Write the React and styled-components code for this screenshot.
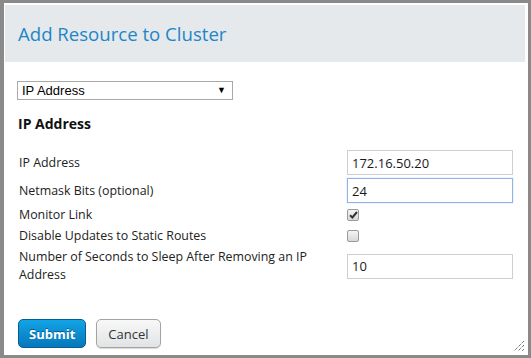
import React from "react";
import styled, { createGlobalStyle } from "styled-components";

const GlobalStyle = createGlobalStyle`
  html, body {
    margin: 0;
    padding: 0;
    background: #8a8a8a;
  }
  body {
    font-family: "Open Sans", "Noto Sans", sans-serif;
  }
`;

const Dialog = styled.div`
  position: relative;
  box-sizing: border-box;
  margin: 3px 0 0 4px;
  width: 524px;
  height: 352px;
  background: #fff;
  padding: 2px 3px 0 1px;
`;

const Header = styled.div`
  height: 57px;
  background: #e5e9ec;
  display: flex;
  align-items: center;
  padding-left: 13px;
`;

const Title = styled.h1`
  margin: 0;
  font-size: 18.6px;
  font-weight: 400;
  color: #1d86c8;
`;

const Body = styled.div`
  padding: 0 13px;
  display: flex;
  flex-direction: column;
`;

const Select = styled.div`
  box-sizing: border-box;
  margin: 19px 0 0 -1px;
  width: 216px;
  height: 19px;
  border: 1px solid #a9a9a9;
  display: flex;
  align-items: center;
  justify-content: space-between;
  padding: 0 6px 0 4px;
  font-family: "Liberation Sans", Arial, sans-serif;
  font-size: 13px;
  color: #000;
`;

const Arrow = styled.span`
  font-size: 9px;
  line-height: 1;
`;

const Heading = styled.h2`
  margin: 14px 0 0;
  font-size: 14px;
  line-height: 20px;
  font-weight: 700;
  color: #111;
`;

const Form = styled.div`
  margin-top: 16px;
  display: grid;
  grid-template-columns: 329px 166px;
  row-gap: 3px;
  align-items: center;
`;

const Label = styled.div`
  font-size: 12.4px;
  line-height: 18px;
  color: #222;
  padding-left: 1px;
  padding-right: 20px;
`;

const Input = styled.div`
  box-sizing: border-box;
  height: 25px;
  border: 1px solid ${(p) => (p.focused ? "#8fb3ea" : "#cfcfcf")};
  box-shadow: ${(p) => (p.focused ? "0 0 1px #9ebfee" : "none")};
  display: flex;
  align-items: center;
  padding-left: 4px;
  font-size: 13px;
  color: #1a1a1a;
`;

const CheckCell = styled.div`
  height: ${(p) => p.h}px;
  display: flex;
  align-items: center;
`;

const Box = styled.div`
  box-sizing: border-box;
  width: 12px;
  height: 12px;
  border: 1px solid #9a9a9a;
  border-radius: 2px;
  background: linear-gradient(#f4f4f4, #d8d8d8);
  display: flex;
  align-items: center;
  justify-content: center;
`;

const Actions = styled.div`
  margin-top: 35px;
  display: flex;
  gap: 10px;
`;

const Button = styled.button`
  box-sizing: border-box;
  height: 29px;
  padding: 0 ${(p) => (p.primary ? "10px" : "11px")};
  border-radius: 5px;
  font-family: "Open Sans", sans-serif;
  font-size: 13px;
  border: 1px solid ${(p) => (p.primary ? "#055d95" : "#a3a3a3")};
  background: ${(p) =>
    p.primary
      ? "linear-gradient(#12a4e6, #0677bb)"
      : "linear-gradient(#f8f8f8, #e1e3e5)"};
  color: ${(p) => (p.primary ? "#fff" : "#333")};
  font-weight: ${(p) => (p.primary ? 700 : 400)};
  text-shadow: ${(p) => (p.primary ? "0 -1px 0 #035a8c" : "none")};
  box-shadow: ${(p) => (p.primary ? "none" : "0 1px 1px rgba(0,0,0,0.15)")};
`;

const Grip = styled.svg`
  position: absolute;
  right: 3px;
  bottom: 3px;
`;

function Checkbox({ checked, h }) {
  return (
    <CheckCell h={h}>
      <Box>
        {checked && (
          <svg width="9" height="8" viewBox="0 0 9 8">
            <path d="M1 4.2 L3.4 6.5 L8 1" fill="none" stroke="#333" strokeWidth="2" />
          </svg>
        )}
      </Box>
    </CheckCell>
  );
}

export default function App() {
  return (
    <>
      <GlobalStyle />
      <Dialog>
        <Header>
          <Title>Add Resource to Cluster</Title>
        </Header>
        <Body>
          <Select>
            <span>IP Address</span>
            <Arrow>▼</Arrow>
          </Select>
          <Heading>IP Address</Heading>
          <Form>
            <Label>IP Address</Label>
            <Input>172.16.50.20</Input>
            <Label>Netmask Bits (optional)</Label>
            <Input focused>24</Input>
            <Label>Monitor Link</Label>
            <Checkbox checked h={15} />
            <Label>Disable Updates to Static Routes</Label>
            <Checkbox h={17} />
            <Label>Number of Seconds to Sleep After Removing an IP Address</Label>
            <Input>10</Input>
          </Form>
          <Actions>
            <Button primary>Submit</Button>
            <Button>Cancel</Button>
          </Actions>
        </Body>
        <Grip width="12" height="12" viewBox="0 0 12 12">
          <path d="M11 1 L1 11 M11 5 L5 11 M11 9 L9 11" stroke="#333" strokeWidth="1" strokeDasharray="1 1" />
        </Grip>
      </Dialog>
    </>
  );
}
